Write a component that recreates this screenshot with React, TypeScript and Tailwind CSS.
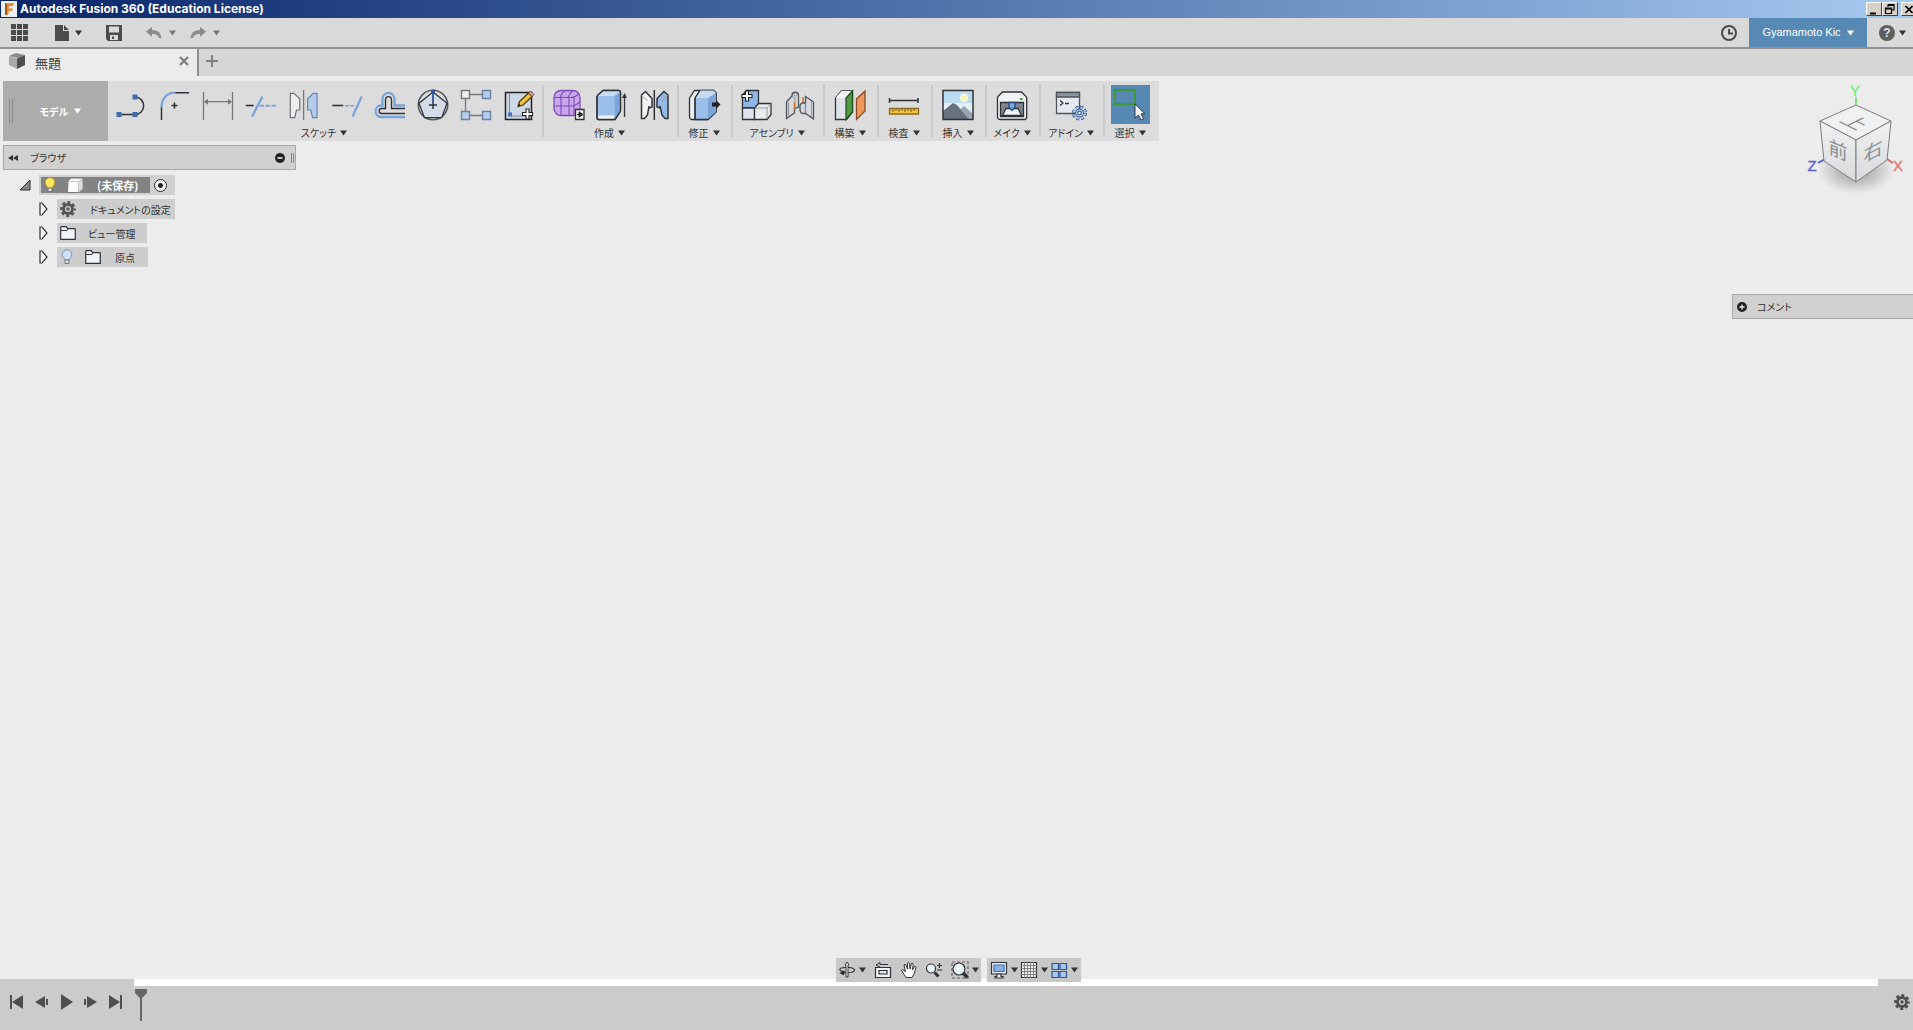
import type { ReactNode } from 'react';

type Tool = { name: string; icon: ReactNode; active?: boolean };
type ToolGroup = { label: string; width: string; tools: Tool[] };

const INK = '#2f3338';
const BLUE = '#7da3dc';
const SHAPE = '#b4cdea';

const Caret = ({ className = 'text-[#333]' }: { className?: string }) => (
  <svg viewBox="0 0 7 6" className={`h-[6px] w-[7px] shrink-0 ${className}`} fill="currentColor" aria-hidden="true">
    <path d="M0 .5h7L3.500 5.500z" />
  </svg>
);

const Art = ({ children }: { children: ReactNode }) => (
  <svg viewBox="0 0 32 32" className="size-8 overflow-visible" fill="none" stroke={INK} strokeWidth="1.3" aria-hidden="true">
    {children}
  </svg>
);

const Gear = ({ className }: { className: string }) => (
  <svg viewBox="0 0 16 16" className={className} fill="none" stroke="currentColor" aria-hidden="true">
    <circle cx="8" cy="8" r="4.500" strokeWidth="2.800" />
    <circle cx="8" cy="8" r="6.500" strokeWidth="2.800" strokeDasharray="2.950 2.155" strokeDashoffset="1.475" />
    <circle cx="8" cy="8" r="1.700" fill="currentColor" stroke="none" />
  </svg>
);

const Plus = ({ x, y }: { x: number; y: number }) => (
  <path
    d={`M${x - 1.5} ${y - 5}h3v3.500h3.500v3h-3.500v3.500h-3v-3.500h-3.500v-3h3.500z`}
    fill="#fff"
    stroke="#222"
    strokeWidth="1.1"
  />
);

const sketchTools: Tool[] = [
  {
    name: '線分',
    icon: (
      <Art>
        <path d="M4 25.500h16a8.700 8.700 0 0 0 0-17.400" strokeWidth="1.500" />
        <path d="M1.500 23h5v5h-5zM17.500 23h5v5h-5zM17.500 5.600h5v5h-5z" fill="#4468ad" stroke="none" />
      </Art>
    )
  },
  {
    name: 'フィレット',
    icon: (
      <Art>
        <path d="M3.500 18v13M17 3.700h14" strokeWidth="1.500" />
        <path d="M3.500 18.500c0-9 5-14.800 14-14.800" stroke={BLUE} strokeWidth="2.300" />
        <path d="M16.500 13.500v6M13.500 16.500h6" strokeWidth="1.600" />
      </Art>
    )
  },
  {
    name: 'スケッチ寸法',
    icon: (
      <Art>
        <g stroke="#777">
          <path d="M2.500 3v28M31.500 3v28M4 12.700h26" />
          <path d="M7 9.700l-4 3 4 3zM27 9.700l4 3-4 3z" fill="#777" stroke="none" />
        </g>
      </Art>
    )
  },
  {
    name: 'トリム',
    icon: (
      <Art>
        <path d="M1.700 16.500h8" strokeWidth="1.600" />
        <path d="M18.500 7.500L8 27.700" stroke={BLUE} strokeWidth="2.300" />
        <path d="M15.500 16.700h16.500" stroke={BLUE} strokeWidth="2" strokeDasharray="4.500 1.500" />
      </Art>
    )
  },
  {
    name: 'ミラー',
    icon: (
      <Art>
        <path d="M16.600 1v30" stroke="#777" />
        <g strokeWidth="1.200" stroke="#6d737b">
          <path d="M3.300 4.300H7l5.700 5.400V21H9.500l-1.800 7.700H3.300z" fill="#eee" />
          <path d="M30 4.300h-3.700l-5.700 5.400V21h3.200l1.800 7.700H30z" fill={SHAPE} stroke="#6685ad" />
        </g>
      </Art>
    )
  },
  {
    name: '延長',
    icon: (
      <Art>
        <path d="M2.300 16.500h11" strokeWidth="1.600" />
        <path d="M15 16.700h9" stroke="#8aa3c8" strokeWidth="1.600" strokeDasharray="4 1" />
        <path d="M31.700 7.500L22.500 27.700" stroke={BLUE} strokeWidth="2.300" />
      </Art>
    )
  },
  {
    name: 'オフセット',
    icon: (
      <Art>
        <path d="M32 28H8c-7 0-7-11.500 0-11.500h1.500V10c0-8 12-8 12 0v6.500H32" stroke={BLUE} strokeWidth="2.300" />
        <path d="M32 24.500H8.500c-3 0-3-5 0-5h4V11c0-4.500 6-4.500 6 0v8.500H32" strokeWidth="1.400" />
      </Art>
    )
  },
  {
    name: 'ポリゴン',
    icon: (
      <Art>
        <circle cx="17" cy="16" r="14.700" stroke="#555c62" strokeWidth="1.600" />
        <path d="M17 3l14 11.300-5.300 14.400H8.500L3 14.300z" fill="#d4dce8" />
        <path d="M17 2v10" stroke="#2e51a0" strokeWidth="1.800" />
        <path d="M17 12v8M13 16h8" strokeWidth="1.500" />
        <circle cx="17" cy="2.500" r="1.900" fill="#2e51a0" stroke="none" />
      </Art>
    )
  },
  {
    name: '矩形状パターン',
    icon: (
      <Art>
        <path d="M6.500 9v14M11 5.500h13M11 26.500h13" stroke="#777" />
        <g stroke="#6983a5" fill={SHAPE} strokeWidth="1.400">
          <path d="M2.500 1.500h8v8h-8z" fill="#eee" stroke="#777" />
          <path d="M23.500 1.500h8v8h-8zM2.500 22.500h8v8h-8zM23.500 22.500h8v8h-8z" />
        </g>
      </Art>
    )
  },
  {
    name: 'スケッチを作成',
    icon: (
      <Art>
        <path d="M3.500 3.500h26v27h-26z" fill="#cfd8e5" stroke="#222" strokeWidth="1.500" />
        <path d="M7.500 4v23H29" stroke="#7b8796" strokeWidth="1" />
        <path d="M6 23.500h4v4H6z" fill="#3f78c4" stroke="none" />
        <path d="M16 17.500l1.500-5 9-8.500 3.500 3.500-9 8.500z" fill="#f1c43d" stroke="#4b3c1a" />
        <path d="M26.500 4l2-2 3.500 3.500-2 2z" fill="#e9a1a0" stroke="#555" strokeWidth="1" />
        <path d="M16 17.500l1-3 2 2z" fill="#222" stroke="none" />
        <Plus x={25.5} y={25} />
      </Art>
    )
  }
];

const createTools: Tool[] = [
  {
    name: 'フォームを作成',
    icon: (
      <Art>
        <rect x="3" y="1.500" width="26" height="25" rx="7" fill="#c9a5ec" stroke="#7c4cb4" />
        <path d="M3 8.500h17q4 0 8-4M3 17h17q4 0 9-4M10 8.500v18M18 8.500v18M23 8v17M9 8.500q1-4 5-7M17 8.500q1-4 5-7" stroke="#7c4cb4" strokeWidth="1.100" />
        <path d="M24.500 20.500H33v10h-8.500z" fill="#f1f1f1" stroke="#333" />
        <path d="M26 25.500h2v-2.700l4 2.700-4 2.700v-2.700" fill="#222" strokeWidth="1" />
      </Art>
    )
  },
  {
    name: '押し出し',
    icon: (
      <Art>
        <path d="M4 6l5-4.500h15.500q2 0 2 2V22L21 30.500H4.500q-1.500 0-1.500-1.500V8z" fill="#9bbfe9" />
        <path d="M4 6l5-4.500h15.500q2 0 2 2L20.500 7H3z" fill="#c7dcf3" stroke="none" />
        <path d="M20.500 7l6-4.500V22L21 30z" fill="#7ba5d8" stroke="none" />
        <path d="M4 26.500h16v3.500H4.500z" fill="#f2f2f2" stroke="none" />
        <path d="M4 6l5-4.500h15.500q2 0 2 2V22L21 30.500H4.500q-1.500 0-1.500-1.500V8z" />
        <path d="M30.500 28V8" />
        <path d="M30.500 4l2.500 5h-5z" fill={INK} stroke="none" />
      </Art>
    )
  },
  {
    name: 'ミラー',
    icon: (
      <Art>
        <path d="M17.300 1v30" strokeWidth="1.500" />
        <g strokeWidth="1.500">
          <path d="M4.500 6l4-3.500 6.500 7V18l-3 1v-2l-1.500 9-3 3.500h-3z" fill="#f1f1f1" />
          <path d="M31 6l-4-3.500-7 7V18l3 1v-2l2 9 3 3.500h3z" fill="#94b9e6" />
          <path d="M4.500 6l6 6M31 6l-6 6" stroke="#999" strokeWidth=".8" />
        </g>
      </Art>
    )
  }
];

const modifyTools: Tool[] = [
  {
    name: 'プレス/プル',
    icon: (
      <Art>
        <path d="M1.500 9l5-7.500h19L28 4v19l-8 7.500H3Q1.500 30 1.500 28z" fill="#e9eef4" />
        <path d="M7 9l5-7.500h13.500L28 4v19l-8 7.500H7z" fill="#9bbfe9" />
        <path d="M7 9h13l8-5-2.500-2.500H12z" fill="#c7dcf3" stroke="none" />
        <path d="M20 9l8-5v19l-8 7z" fill="#7ba5d8" stroke="none" />
        <path d="M7 9l5-7.500M7 9v21" />
        <path d="M24 13.500h4V11l4.500 4.500L28 20v-2.500h-4z" fill="#222" stroke="none" />
      </Art>
    )
  }
];

const assembleTools: Tool[] = [
  {
    name: '新規コンポーネント',
    icon: (
      <Art>
        <path d="M2.500 6l4-4.500h12V17l-4 2h-12z" fill="#8fb5e4" />
        <path d="M2.500 19h12v11.500h-12z" fill="#dfe5ed" />
        <path d="M14.500 19l4-4.500H31v11L27 30.500H14.500z" fill="#e9ebed" />
        <path d="M14.500 19H27l4-4.500M27 19v11" stroke="#888" strokeWidth=".8" />
        <Plus x={7} y={7} />
      </Art>
    )
  },
  {
    name: 'ジョイント',
    icon: (
      <Art>
        <path d="M3.500 13l5.500-6V6.500C9 2 15.500 2 15.500 6.500V18l-4 2v4l-8 5.500z" fill="#d5dadf" stroke="#4d545c" />
        <path d="M3.500 13l2 1.500v14" stroke="#888" strokeWidth=".9" />
        <path d="M9 7.500l3 1.500v12" stroke="#888" strokeWidth=".9" />
        <circle cx="12.500" cy="5.500" r="1.500" fill="#fff" stroke="#777" strokeWidth=".9" />
        <path d="M11.500 20v-7M20 8v7" stroke="#d8782e" strokeWidth="1.600" />
        <path d="M22.500 7.500l8 5.500v17l-8-5.500h-3q-2.500-1-2.500-4V16q2.500-3.500 5.500-1.500z" fill="#d5dadf" stroke="#4d545c" />
        <path d="M22.500 14v10" stroke="#888" />
        <path d="M28.500 12v16" stroke="#999" strokeWidth=".9" />
      </Art>
    )
  }
];

const TOOL_GROUPS: ToolGroup[] = [
  { label: 'スケッチ', width: '', tools: sketchTools },
  { label: '作成', width: '', tools: createTools },
  { label: '修正', width: 'min-w-[54px]', tools: modifyTools },
  { label: 'アセンブリ', width: '', tools: assembleTools },
  {
    label: '構築',
    width: 'min-w-[54px]',
    tools: [
      {
        name: 'オフセット平面',
        icon: (
          <Art>
            <path d="M1.500 9l6-7h11v21l-6 7.500h-11z" fill="#dfe3e8" />
            <path d="M1.500 9l6-7h11l-6 7z" fill="#f5f5f5" stroke="none" />
            <path d="M12 9l6.500-7v21L12 30.500z" fill="#4f9a43" stroke="#24501f" />
            <path d="M22.500 10L31 2v20l-8.500 8.500z" fill="#ee9a5f" stroke="#8b4a24" />
          </Art>
        )
      }
    ]
  },
  {
    label: '検査',
    width: 'min-w-[54px]',
    tools: [
      {
        name: '計測',
        icon: (
          <Art>
            <path d="M1.500 9v5M30 9v5M2 11.500h28" strokeWidth="1.500" />
            <path d="M1.500 19.500h29v5.500h-29z" fill="#f6c244" stroke="#8b6b21" />
            <path d="M5 20v3M8 20v2M11 20v3M14 20v2M17 20v3M20 20v2M23 20v3M26 20v2" stroke="#7a5a10" strokeWidth="1" />
          </Art>
        )
      }
    ]
  },
  {
    label: '挿入',
    width: 'min-w-[54px]',
    tools: [
      {
        name: 'デカール',
        icon: (
          <Art>
            <path d="M1 1.500h30v29H1z" fill="#bcdcf3" stroke="none" />
            <path d="M1 14h30v10H1z" fill="#e3f0f6" stroke="none" />
            <circle cx="22" cy="9" r="3.300" fill="#fff3a8" stroke="#fffbe0" />
            <path d="M14 24l8-7 9 8v5H14z" fill="#9aa5af" stroke="none" />
            <path d="M1 22l10-8 4 2 12 14.500H1z" fill="#68717c" stroke="none" />
            <path d="M1 1.500h30v29H1z" strokeWidth="1.500" />
          </Art>
        )
      }
    ]
  },
  {
    label: 'メイク',
    width: 'min-w-[54px]',
    tools: [
      {
        name: '3D プリント',
        icon: (
          <Art>
            <path d="M1.500 9q0-1 1-2l4-4h19l4 4q1.200 1 1.200 2v19q0 2.500-2.500 2.500H4Q1.500 30.500 1.500 28z" fill="#f0f1f2" />
            <path d="M4.500 13.500h23v14h-23z" fill="#7d858e" />
            <path d="M10 19.500h12l3.500 7h-19z" fill="#edf3fb" />
            <path d="M13 13.500h6v4.500l-3 3.500-3-3.500z" fill="#7eabe3" stroke="#24487e" />
            <path d="M24 10h2.500" stroke="#3b9a3b" strokeWidth="2" />
          </Art>
        )
      }
    ]
  },
  {
    label: 'アドイン',
    width: 'min-w-[64px]',
    tools: [
      {
        name: 'スクリプトとアドイン',
        icon: (
          <Art>
            <path d="M1.500 3.500h23v21h-23z" fill="#e6eaf0" stroke="#4d545c" />
            <path d="M1.500 3.500h23V8h-23z" fill="#8f969f" stroke="#4d545c" />
            <path d="M5 11.500l3 2.500-3 2.500M10 14.500h4" />
            <circle cx="24.500" cy="24" r="5.500" stroke="#3c5f98" strokeWidth="4" strokeDasharray="2.600 1.720" />
            <circle cx="24.500" cy="24" r="5.200" stroke="#c8dcf4" strokeWidth="2.600" strokeDasharray="1.400 2.684" strokeDashoffset="-.6" />
            <circle cx="24.500" cy="24" r="4" fill="#c8dcf4" stroke="#3c5f98" strokeWidth="1" />
            <circle cx="24.500" cy="24" r="1.800" fill="#fff" stroke="#3c5f98" />
          </Art>
        )
      }
    ]
  },
  {
    label: '選択',
    width: 'min-w-[54px]',
    tools: [
      {
        name: '選択',
        active: true,
        icon: (
          <Art>
            <path d="M1 1h20v14H1z" stroke="#3d9a2f" strokeWidth="1.800" />
            <path d="M21 15v14l3.500-3 2.500 5 2.500-1.200-2.500-5H31z" fill="#fff" stroke="#333" strokeWidth="1" />
          </Art>
        )
      }
    ]
  }
];

const TitleBar = () => (
  <header className="flex h-[18px] items-center overflow-hidden bg-linear-to-r from-[#0a246a] to-[#a6caf0] pl-px">
    <svg viewBox="0 0 16 16" className="size-4 shrink-0" aria-hidden="true">
      <path d="M0 0h16v16H0z" fill="#eceff2" />
      <path d="M4 2h9l-1 3H8v2.500h4L11 10H8l-1 4H4z" fill="#e58a32" />
      <path d="M4 2l2 2v9l-2 1z" fill="#a95417" />
    </svg>
    <h1 className="ml-[3px] flex-1 font-['Inter'] text-xs leading-4 font-bold text-white">Autodesk Fusion 360 (Education License)</h1>
    <div className="-mr-1 flex shrink-0">
      <WindowButton label="最小化">
        <path d="M3 9.500h6v2H3z" fill="#000" />
      </WindowButton>
      <WindowButton label="元に戻す">
        <path d="M5 1.500h6V7H9M5 2.500h6M5 1.500V4M2.500 5h6v5.500h-6zM2.500 6h6" fill="none" stroke="#000" strokeWidth="1.200" />
      </WindowButton>
      <span className="w-[3px]" />
      <WindowButton label="閉じる">
        <path d="M3.500 3l7 7M10.500 3l-7 7" stroke="#000" strokeWidth="1.700" />
      </WindowButton>
    </div>
  </header>
);

const WindowButton = ({ label, children }: { label: string; children: ReactNode }) => (
  <button
    type="button"
    aria-label={label}
    className="h-[14px] w-4 border border-t-white border-r-[#404040] border-b-[#404040] border-l-white bg-[#d6d2ca]"
  >
    <svg viewBox="0 0 14 12" className="h-3 w-[14px]">
      {children}
    </svg>
  </button>
);

const QuickBar = () => (
  <div className="flex h-[31px] items-center border-b-2 border-[#939393] bg-[#d9d9d9] text-[#4b4b4b]">
    <button type="button" aria-label="データ パネル" className="ml-[11px]">
      <svg viewBox="0 0 17 17" className="size-[17px]" fill="currentColor">
        <path d="M0 0h5v5H0zM6 0h5v5H6zM12 0h5v5h-5zM0 6h5v5H0zM6 6h5v5H6zM12 6h5v5h-5zM0 12h5v5H0zM6 12h5v5H6zM12 12h5v5h-5z" />
      </svg>
    </button>
    <button type="button" aria-label="ファイル" className="ml-[27px] flex items-center gap-1.5">
      <svg viewBox="0 0 14 16" className="h-4 w-[14px]" fill="currentColor">
        <path d="M0 0h8v6h6v10H0zM9 0l5 5H9z" />
      </svg>
      <Caret />
    </button>
    <button type="button" aria-label="保存" className="ml-6">
      <svg viewBox="0 0 16 16" className="size-4" fill="currentColor" fillRule="evenodd">
        <path d="M0 0h16v16H2l-2-2zM3 1.500v6h10v-6zM4 10v5h8v-5zM6 11.500h2V14H6z" />
      </svg>
    </button>
    <button type="button" aria-label="元に戻す" className="ml-6 flex items-center gap-[7px] text-[#8b8b8b]">
      <svg viewBox="0 0 16 12" className="h-3 w-4" fill="currentColor">
        <path d="M0 4.500L6 0v3c6 0 9 3 9.500 8h-2.500c-1-3-3-4-7-4v3z" />
      </svg>
      <Caret className="text-[#777]" />
    </button>
    <button type="button" aria-label="やり直し" className="ml-[14px] flex items-center gap-[7px] text-[#8b8b8b]">
      <svg viewBox="0 0 16 12" className="h-3 w-4" fill="currentColor">
        <path d="M16 4.500L10 0v3C4 3 1 6 .5 11H3c1-3 3-4 7-4v3z" />
      </svg>
      <Caret className="text-[#777]" />
    </button>

    <button type="button" aria-label="ジョブ ステータス" className="ml-auto">
      <svg viewBox="0 0 16 16" className="size-4" fill="none" stroke="currentColor" strokeWidth="2">
        <circle cx="8" cy="8" r="7" />
        <path d="M8 4v4.500h4" />
      </svg>
    </button>
    <button
      type="button"
      className="ml-3 flex w-[118px] items-center justify-center gap-1.5 self-stretch bg-[#5689b4] font-['Liberation_Sans'] text-[11px] text-white"
    >
      Gyamamoto Kic
      <Caret className="text-white" />
    </button>
    <button type="button" aria-label="ヘルプ" className="mr-[7px] ml-3 flex items-center gap-1">
      <span className="flex size-4 items-center justify-center rounded-full bg-[#5f5f5f] font-['Liberation_Sans'] text-xs leading-4 font-bold text-[#e3e3e3]">
        ?
      </span>
      <Caret />
    </button>
  </div>
);

const TabBar = () => (
  <div className="flex h-[27px] bg-[#d6d6d6]">
    <div className="flex w-[199px] items-center border-r-2 border-[#8f8f8f] bg-[#ececec] pr-2 pl-[9px]">
      <svg viewBox="0 0 16 16" className="-mt-1 size-4" aria-hidden="true">
        <path d="M0 3l7-3 9 2-7 3z" fill="#898989" />
        <path d="M0 3l8 2.500V16l-8-4z" fill="#aaa" />
        <path d="M8 5.500L16 2v10l-8 4z" fill="#4f4f4f" />
      </svg>
      <span className="ml-2.5 text-[13px] leading-5 text-[#444]">無題</span>
      <button type="button" aria-label="タブを閉じる" className="ml-auto -mt-1">
        <svg viewBox="0 0 10 10" className="size-2.5" stroke="#808080" strokeWidth="2.400">
          <path d="M1 1l8 8M9 1L1 9" />
        </svg>
      </button>
    </div>
    <button type="button" aria-label="新しいデザイン" className="-mt-1 ml-[7px]">
      <svg viewBox="0 0 12 12" className="size-3" stroke="#808080" strokeWidth="2">
        <path d="M6 0v12M0 6h12" />
      </svg>
    </button>
  </div>
);

const Ribbon = () => (
  <div className="mt-[5px] ml-[3px] flex h-[60px] w-fit bg-[#dcdcdc]">
    <button
      type="button"
      className="flex w-[105px] items-center bg-[#acacac] pl-1.5 text-[10px] font-bold text-white"
    >
      <span className="h-6 w-1 border-x border-[#8b8b8b]" />
      <span className="flex flex-1 items-center justify-center gap-1.5">
        モデル
        <Caret className="text-white" />
      </span>
    </button>
    {TOOL_GROUPS.map((group) => (
      <section
        key={group.label}
        aria-label={group.label}
        className={`my-1 flex flex-col items-center border-r-2 border-[#c9c9c9] pr-[3px] pl-px last:border-transparent ${group.width}`}
      >
        <div className="flex">
          {group.tools.map((tool) => (
            <button
              key={tool.name}
              type="button"
              aria-label={tool.name}
              aria-pressed={tool.active}
              className={`flex h-[39px] items-center justify-center ${tool.active ? 'w-[39px] bg-[#5588b3]' : 'w-[43px]'}`}
            >
              {tool.icon}
            </button>
          ))}
        </div>
        <button type="button" className="flex items-center gap-1 text-[10px] leading-[18px] text-[#333]">
          {group.label}
          <Caret />
        </button>
      </section>
    ))}
  </div>
);

const Bulb = ({ lit }: { lit?: boolean }) => (
  <svg viewBox="0 0 12 16" className="h-4 w-3 shrink-0" aria-hidden="true">
    <path
      d="M6 .7a4.800 4.800 0 0 0-4.800 4.800C1.200 8 3.500 9 3.700 11h4.600c.2-2 2.500-3 2.500-5.500A4.800 4.800 0 0 0 6 .7z"
      fill={lit ? '#ffe960' : '#cfe1fa'}
      stroke={lit ? '#b99a1c' : '#7a92b8'}
    />
    <path d="M4 11h4v3.500H4z" fill="#ddd" stroke="#666" strokeWidth=".8" />
  </svg>
);

const Folder = () => (
  <svg viewBox="0 0 16 14" className="h-[14px] w-4 shrink-0" aria-hidden="true">
    <path d="M.7 13.300V1.500q0-.8.8-.8h4.800l1.200 2h7q.8 0 .8.8v9.800z" fill="#f0f4f8" stroke="#2f3338" strokeWidth="1.200" />
    <path d="M1 4.500h6l1-1.500" fill="none" stroke="#2f3338" />
  </svg>
);

const Expander = () => (
  <button type="button" aria-label="展開">
    <svg viewBox="0 0 9 14" className="h-[14px] w-[9px]" fill="#f4f4f4" stroke="#333" strokeWidth="1.200">
      <path d="M1 1v12h2l5-6-5-6z" />
    </svg>
  </button>
);

const BrowserPanel = () => (
  <aside className="w-[293px] text-[10px] whitespace-nowrap text-[#333]">
    <div className="flex h-[25px] items-center border border-[#a8a8a8] bg-[#d0d0d0] pr-px pl-1">
      <button type="button" aria-label="折りたたむ">
        <svg viewBox="0 0 10 6" className="h-1.5 w-2.5" fill="#333">
          <path d="M5 0v6L0 3zM10 0v6L5 3z" />
        </svg>
      </button>
      <h2 className="ml-3">ブラウザ</h2>
      <button type="button" aria-label="最小化" className="ml-auto">
        <svg viewBox="0 0 10 10" className="size-2.5">
          <circle cx="5" cy="5" r="5" fill="#222" />
          <path d="M2.500 5h5" stroke="#eee" strokeWidth="1.600" />
        </svg>
      </button>
      <span className="ml-1.5 h-2.5 w-[3px] border-x border-[#888]" />
    </div>
    <ul className="mt-[5px] flex flex-col gap-1">
      <li className="flex items-center pl-4">
        <button type="button" aria-label="折りたたむ">
          <svg viewBox="0 0 12 12" className="size-3" fill="#858585" stroke="#333">
            <path d="M11 1v10H1z" />
          </svg>
        </button>
        <div className="ml-2 flex h-5 w-[136px] items-center bg-[#d0d0d0] pl-0.5">
          <span className="flex h-4 w-[109px] items-center bg-[#838383] pl-[3px] text-[11px] font-bold text-white">
            <Bulb lit />
            <svg viewBox="0 0 16 16" className="ml-[11px] size-4" fill="#fafafa" stroke="#777" aria-hidden="true">
              <path d="M1 4l3-3h10.500q1 0 1 1v10l-3.500 3.500H1.500q-1 0-1-1z" />
              <path d="M1 4.500h10.500V15l4-3V2l-4 2.500" fill="#ddd" stroke="#bbb" strokeWidth=".8" />
            </svg>
            <span className="ml-3.5 leading-4">(未保存)</span>
          </span>
          <label className="ml-1 flex">
            <input
              type="radio"
              name="active-component"
              defaultChecked
              aria-label="コンポーネントをアクティブ化"
              className="size-[13px] appearance-none rounded-full border border-[#333] bg-[radial-gradient(circle,#222_0_2px,#f4f4f4_3px)]"
            />
          </label>
        </div>
      </li>
      <li className="flex items-center pl-9">
        <Expander />
        <div className="ml-[9px] flex h-5 w-[118px] items-center bg-[#cdcdcd] pl-[3px]">
          <Gear className="size-4 shrink-0 text-[#555]" />
          <span className="ml-3.5">ドキュメントの設定</span>
        </div>
      </li>
      <li className="flex items-center pl-9">
        <Expander />
        <div className="ml-[9px] flex h-5 w-[90px] items-center bg-[#cdcdcd] pl-[3px]">
          <Folder />
          <span className="ml-3">ビュー管理</span>
        </div>
      </li>
      <li className="flex items-center pl-9">
        <Expander />
        <div className="ml-[9px] flex h-5 w-[91px] items-center bg-[#cdcdcd] pl-1">
          <Bulb />
          <span className="w-3" />
          <Folder />
          <span className="ml-3.5">原点</span>
        </div>
      </li>
    </ul>
  </aside>
);

const ViewCube = () => (
  <svg viewBox="0 0 110 120" className="h-[120px] w-[110px]" role="img" aria-label="ViewCube">
    <defs>
      <radialGradient id="cube-shadow">
        <stop offset="0" stopColor="#777" stopOpacity=".75" />
        <stop offset="1" stopColor="#777" stopOpacity="0" />
      </radialGradient>
      <linearGradient id="cube-side" x1="0" y1="0" x2="0" y2="1">
        <stop offset="0" stopColor="#f0f1f2" />
        <stop offset="1" stopColor="#d8dadc" />
      </linearGradient>
    </defs>
    <ellipse cx="56" cy="90" rx="38" ry="24" fill="url(#cube-shadow)" />
    <path d="M56 17v8" stroke="#62dc62" strokeWidth="1.500" />
    <path d="M25 79l-7 4" stroke="#5b55d6" strokeWidth="2" />
    <path d="M87 79l6 4" stroke="#e06a6a" strokeWidth="2" />
    <g stroke="#7b7d80" strokeWidth="1">
      <path d="M56 25L20 41l36 19 35-19z" fill="#f0f1f2" />
      <path d="M20 41l36 19v42L24 81z" fill="url(#cube-side)" />
      <path d="M91 41L56 60v42l31-22z" fill="url(#cube-side)" />
    </g>
    <g fontFamily="'Noto Sans CJK JP', sans-serif" fontSize="19" textAnchor="middle" fill="#8b8f94">
      <text transform="matrix(1 .5 -1 .5 48 46)">上</text>
      <text transform="translate(38 77) skewY(22)">前</text>
      <text transform="translate(73 78) skewY(-28)">右</text>
    </g>
    <g fontFamily="'Liberation Sans', sans-serif" fontSize="15" textAnchor="middle">
      <text x="55" y="16" fill="#76ee76" stroke="#76ee76" strokeWidth=".4">
        Y
      </text>
      <text x="12" y="91" fill="#5f5be0" stroke="#5f5be0" strokeWidth=".4">
        Z
      </text>
      <text x="98" y="91" fill="#f07474" stroke="#f07474" strokeWidth=".4">
        X
      </text>
    </g>
  </svg>
);

const NavButton = ({ label, caret, children }: { label: string; caret?: boolean; children: ReactNode }) => (
  <button type="button" aria-label={label} className="flex items-center gap-[3px]">
    <svg viewBox="0 0 18 18" className="size-[18px]" fill="none" stroke={INK} strokeWidth="1.200">
      {children}
    </svg>
    {caret ? <Caret /> : null}
  </button>
);

const NavBar = () => (
  <nav aria-label="ナビゲーション" className="relative z-10 -mb-[3px] flex justify-center gap-1.5 pl-1">
    <div className="flex h-6 w-[145px] items-center justify-between bg-[#c8c8c8] px-0.5">
      <NavButton label="オービット" caret>
        <path d="M7 11c-7-1-7-4 0-4.500h4c7 .5 7 4 2 5L3 12" />
        <path d="M6 9.500v5L1.500 12z" fill="#222" stroke="none" />
        <path d="M8 16V4H7l2-3 2 3h-1v12z" fill="#fff" strokeWidth="1" />
      </NavButton>
      <NavButton label="ビュー正面">
        <path d="M1.500 6.500h15v10h-15z" fill="#f2f2f2" />
        <path d="M5 9.500h8V13H5z" fill="#dfe5ec" />
        <path d="M14 3.500H6V1.500L2 4l4 2" strokeWidth="1" />
      </NavButton>
      <NavButton label="画面移動">
        <path
          d="M6 16.500L1.500 9.500q.5-1.500 2-.5l2 2L4 4q1-1.500 2 0l1.500 4L7.500 2q1-1.500 2 0l.5 6 1.500-5.500q1.500-1 1.700.5L12.500 9l2-3.500q1.500-.5 1.500 1L14 13l-2 3.500z"
          fill="#fff"
          strokeWidth="1"
        />
      </NavButton>
      <NavButton label="ズーム">
        <circle cx="6" cy="7.500" r="4.500" fill="#edf5f8" />
        <path d="M9.500 11.500l4 4" strokeWidth="3" />
        <path d="M12 4.500h5M14.500 2v5M12 9h5" />
      </NavButton>
      <NavButton label="フィット" caret>
        <path d="M1 1h16v16H1z" strokeDasharray="3 2" stroke="#666" />
        <circle cx="8" cy="8" r="6" fill="#e8f3f6" />
        <path d="M12 12l4.500 4.500" strokeWidth="3.500" />
      </NavButton>
    </div>
    <div className="flex h-6 w-[94px] items-center justify-between bg-[#c8c8c8] px-[3px]">
      <NavButton label="表示設定" caret>
        <path d="M1.500 1.500h15V13h-15z" fill="#e8edf3" />
        <path d="M4 4h10v6.500H4z" fill="#87b2ec" stroke="#4570ad" />
        <path d="M7 13h4v2.500h2v1.500H5v-1.500h2z" fill="#eee" />
      </NavButton>
      <NavButton label="グリッドとスナップ" caret>
        <path d="M1.500 1.500h15v15h-15z" fill="#f1f1f1" />
        <path d="M4.500 1v16M7.500 1v16M10.500 1v16M13.500 1v16M1 4.500h16M1 7.500h16M1 10.500h16M1 13.500h16" stroke="#777" strokeWidth=".9" />
      </NavButton>
      <NavButton label="ビューポート" caret>
        <path d="M2 2.500h6.500v6H2zM10 2.500h6.500v6H10zM2 10.500h6.500v6H2zM10 10.500h6.500v6H10z" fill="#a9c8f0" stroke="#2e568f" strokeWidth="1.200" />
      </NavButton>
    </div>
  </nav>
);

const PLAYBACK = [
  { label: '先頭へ', path: 'M0 1h2v14H0zM13 1v14L2 8z' },
  { label: '戻る', path: 'M10 2v12L0 8zM11 5h2v6h-2z' },
  { label: '再生', path: 'M1 0v16l12-8z' },
  { label: '進む', path: 'M3 2v12l10-6zM0 5h2v6H0z' },
  { label: '末尾へ', path: 'M11 1h2v14h-2zM0 1v14l11-7z' }
];

const Timeline = () => (
  <footer className="flex h-[51px] bg-[#cbcbcb] text-[#4f4f4f]">
    <div className="flex w-[134px] items-center justify-between pr-3 pb-1.5 pl-2.5">
      {PLAYBACK.map((item) => (
        <button key={item.label} type="button" aria-label={item.label}>
          <svg viewBox="0 0 13 16" className="h-4 w-[13px]" fill="currentColor">
            <path d={item.path} />
          </svg>
        </button>
      ))}
    </div>
    <div className="flex-1 border-t-[7px] border-white pt-[3px] pl-px">
      <svg viewBox="0 0 12 32" className="h-8 w-3" fill="#666" aria-hidden="true">
        <path d="M0 0h12v4L7 9v23H5V9L0 4z" />
      </svg>
    </div>
    <button type="button" aria-label="タイムライン設定" className="flex w-[35px] items-center justify-end pr-[3px] pb-1.5">
      <Gear className="size-4" />
    </button>
  </footer>
);

export default function App() {
  return (
    <div className="flex min-h-screen flex-col overflow-hidden bg-[#ececec] font-['Noto_Sans_CJK_JP',sans-serif] [font-feature-settings:'palt']">
      <TitleBar />
      <QuickBar />
      <TabBar />
      <main className="flex flex-1 flex-col">
        <div className="flex flex-1 justify-between">
          <div>
            <Ribbon />
            <div className="mt-1 ml-[3px]">
              <BrowserPanel />
            </div>
          </div>
          <div className="flex w-[181px] flex-col items-end pt-1">
            <div className="pr-[3px]">
              <ViewCube />
            </div>
            <button
              type="button"
              className="mt-[94px] flex h-[25px] w-full items-center border border-r-0 border-[#a8a8a8] bg-[#d0d0d0] pl-1 text-[10px] text-[#333]"
            >
              <svg viewBox="0 0 10 10" className="size-2.5" aria-hidden="true">
                <circle cx="5" cy="5" r="5" fill="#222" />
                <path d="M2.500 5h5M5 2.500v5" stroke="#eee" strokeWidth="1.300" />
              </svg>
              <span className="ml-2.5">コメント</span>
            </button>
          </div>
        </div>
        <NavBar />
      </main>
      <Timeline />
    </div>
  );
}
